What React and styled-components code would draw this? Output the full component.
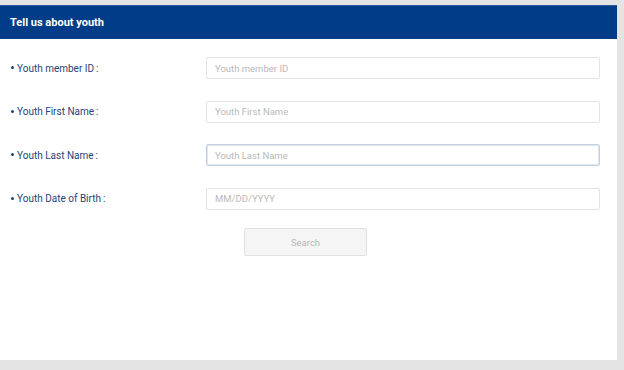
import React from 'react';
import styled, { createGlobalStyle } from 'styled-components';

const GlobalStyle = createGlobalStyle`
    html, body {
        margin: 0;
        padding: 0;
        background: #e4e4e4;
        font-family: Roboto, "Liberation Sans", sans-serif;
    }
`;

const Page = styled.div`
    padding: 5px 7px 10px 0;
`;

const Card = styled.section`
    background: #ffffff;
    height: 355px;
`;

const CardHeader = styled.h2`
    margin: 0;
    height: 34px;
    background: #003c87;
    border-top: 1px solid #2b5aa0;
    box-sizing: border-box;
    padding-left: 10px;
    display: flex;
    align-items: center;
    color: #ffffff;
    font-size: 11px;
    font-weight: 700;
`;

const Form = styled.form`
    padding: 18px 17px 0 10px;
    display: flex;
    flex-direction: column;
    gap: 21.5px;
`;

const Row = styled.div`
    display: grid;
    grid-template-columns: 196px 1fr;
    align-items: center;
`;

const Label = styled.label`
    color: #1f4478;
    font-size: 10px;
    display: flex;
    align-items: center;
    &::before {
        content: '';
        width: 3px;
        height: 3px;
        border-radius: 50%;
        background: #1f4478;
        margin: 0 3px 1px 1px;
    }
`;

const Colon = styled.span`
    margin-left: 2px;
`;

const Input = styled.input`
    box-sizing: border-box;
    height: 22px;
    width: 100%;
    border: 1px solid ${p => (p.$active ? '#c2cfdf' : '#e3e3e3')};
    box-shadow: ${p => (p.$active ? 'inset 0 0 0 1px #dfe6ef' : 'none')};
    border-radius: 2px;
    padding: 0 8px;
    font-family: Roboto, "Liberation Sans", sans-serif;
    font-size: 9.5px;
    outline: none;
    &::placeholder {
        color: #b9b9b9;
    }
`;

const Actions = styled.div`
    padding-left: 234px;
    margin-top: -3px;
`;

const SearchButton = styled.button`
    width: 123px;
    height: 28px;
    background: #f5f5f5;
    border: 1px solid #e0e0e0;
    border-radius: 2px;
    color: #b8b8b8;
    font-family: Roboto, "Liberation Sans", sans-serif;
    font-size: 9.5px;
`;

const fields = [
    { label: 'Youth member ID', placeholder: 'Youth member ID' },
    { label: 'Youth First Name', placeholder: 'Youth First Name' },
    { label: 'Youth Last Name', placeholder: 'Youth Last Name', active: true },
    { label: 'Youth Date of Birth', placeholder: 'MM/DD/YYYY' },
];

export default function App() {
    return (
        <Page>
            <GlobalStyle />
            <Card>
                <CardHeader>Tell us about youth</CardHeader>
                <Form onSubmit={e => e.preventDefault()}>
                    {fields.map(f => (
                        <Row key={f.label}>
                            <Label>{f.label}<Colon>:</Colon></Label>
                            <Input placeholder={f.placeholder} $active={f.active} />
                        </Row>
                    ))}
                    <Actions>
                        <SearchButton type="button">Search</SearchButton>
                    </Actions>
                </Form>
            </Card>
        </Page>
    );
}
